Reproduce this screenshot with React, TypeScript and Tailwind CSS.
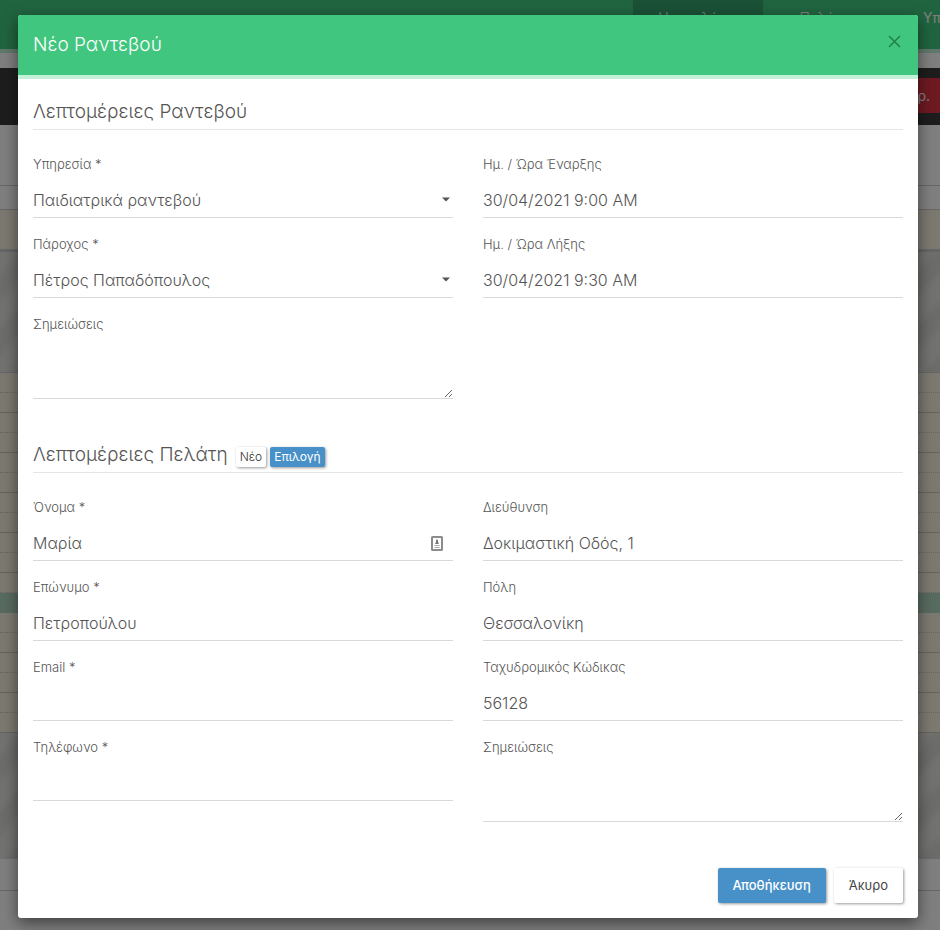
import { useState } from 'react'
import type { ReactNode } from 'react'

const CONTROL = 'mt-2.5 block w-full border-b border-[#d9d9d9] bg-transparent text-base text-[#555] outline-none'

interface FieldProps {
  id: string
  label: string
  value?: string
  icon?: ReactNode
}

function Label({ id, label }: { id: string; label: string }) {
  return (
    <label htmlFor={id} className="block text-[13px] leading-4 text-[#555]">
      {label}
    </label>
  )
}

function TextField({ id, label, value = '', icon }: FieldProps) {
  return (
    <div className="relative pt-[18px]">
      <Label id={id} label={label} />
      <input id={id} type="text" defaultValue={value} className={`${CONTROL} h-9`} />
      {icon && <span className="absolute right-2.5 bottom-2.5">{icon}</span>}
    </div>
  )
}

function SelectField({ id, label, value = '' }: FieldProps) {
  return (
    <div className="relative pt-[18px]">
      <Label id={id} label={label} />
      <select id={id} defaultValue={value} className={`${CONTROL} h-9 appearance-none`}>
        <option value={value}>{value}</option>
      </select>
      <svg className="pointer-events-none absolute right-[3px] bottom-4" width="8" height="5" viewBox="0 0 8 5">
        <path d="M0 0.5h8L4 4.5z" fill="#555" />
      </svg>
    </div>
  )
}

function NotesField({ id, label }: FieldProps) {
  return (
    <div className="pt-[18px]">
      <Label id={id} label={label} />
      <textarea id={id} className={`${CONTROL} h-[57px] resize`} />
    </div>
  )
}

function SectionTitle({ title, children }: { title: string; children?: ReactNode }) {
  return (
    <div className="flex h-9 items-center gap-1 border-b border-[#e5e5e5]">
      <h2 className="mr-1 text-[19px] leading-8 text-[#555]">{title}</h2>
      {children}
    </div>
  )
}

function ContactIcon() {
  return (
    <svg width="12" height="15" viewBox="0 0 12 15" fill="none">
      <rect x="1" y="1" width="10" height="13" rx="0.5" stroke="#8c8c8c" strokeWidth="2" />
      <path d="M6 3l1 1.5v1.5L8 8H4l1-2V4.500z" fill="#777" />
      <path d="M3.500 9.500h5M3.500 11.500h5" stroke="#aaa" />
    </svg>
  )
}

const STRIPES =
  'bg-[repeating-linear-gradient(135deg,#e4e4e0_0px,#e4e4e0_12px,#d9d9d5_20px,#d9d9d5_30px,#e4e4e0_38px)]'

function Slots({ count }: { count: number }) {
  return (
    <>
      {Array.from({ length: count }, (_, i) => (
        <div
          key={i}
          className={`h-5 border-b border-[#cdc8ba] bg-[#f8f3e2] ${i % 2 === 0 ? 'border-dotted' : 'border-solid'}`}
        />
      ))}
    </>
  )
}

function CalendarPage() {
  return (
    <div className="min-h-screen overflow-hidden bg-white" aria-hidden="true">
      <nav className="flex h-[53px] border-b-4 border-[#c0f1d6] bg-[#41c87f] pl-[633px] text-sm text-white">
        <a href="#calendar" className="w-[130px] shrink-0 bg-[#36a36e] pt-2 text-center">
          Ημερολόγιο
        </a>
        <a href="#customers" className="w-[130px] shrink-0 pt-2 text-center">
          Πελάτες
        </a>
        <a href="#services" className="shrink-0 px-[30px] pt-2 font-normal">
          Υπηρεσίες
        </a>
      </nav>
      <div className="mt-[15px] flex h-[57px] items-start justify-end bg-[#3a3a3a] pt-2.5">
        <button type="button" className="h-[35px] bg-[#dc3545] px-2.5 text-sm font-normal text-white">
          Διαγρ.
        </button>
      </div>
      <div className="h-[61px] border-b border-[#ccc]" />
      <div className="h-6 border-b border-[#ccc]" />
      <div className="h-10 border-b border-[#ccc] bg-[#f8f3e2]" />
      <div className={`h-[123px] border-t-2 border-b border-[#ccc] ${STRIPES}`} />
      <Slots count={11} />
      <div className="h-5 bg-[#b0d6c0]" />
      <Slots count={6} />
      <div className={`h-[126px] ${STRIPES}`} />
      <div className="h-8 border-b border-[#ccc]" />
      <div className="h-10" />
    </div>
  )
}

export default function App() {
  const [open, setOpen] = useState(true)
  const close = () => setOpen(false)

  return (
    <div className="relative h-screen overflow-hidden font-['Inter','Noto_Sans',sans-serif] font-light">
      <CalendarPage />
      {open && (
        <div className="absolute inset-0 overflow-hidden bg-black/50 pt-[15px] pr-[22px] pl-[18px]">
          <div
            role="dialog"
            aria-modal="true"
            aria-labelledby="dialog-title"
            className="mx-auto max-w-[900px] overflow-hidden rounded-[3px] bg-white shadow-[0_5px_15px_rgba(0,0,0,0.5)]"
          >
            <header className="flex h-16 items-start justify-between border-b-4 border-[#c3f0d7] bg-[#41c67f] px-[15px]">
              <h1 id="dialog-title" className="pt-4 text-[19px] leading-7 text-white">
                Νέο Ραντεβού
              </h1>
              <button type="button" aria-label="Κλείσιμο" onClick={close} className="mt-[18px] p-0.5">
                <svg width="13" height="13" viewBox="0 0 13 13" stroke="#21804b" strokeWidth="1.5">
                  <path d="M1 1l11 11M12 1L1 12" />
                </svg>
              </button>
            </header>

            <form className="px-[15px] pt-[15px]" onSubmit={(e) => e.preventDefault()}>
              <SectionTitle title="Λεπτομέρειες Ραντεβού" />
              <div className="mt-2 grid grid-cols-2 gap-x-[30px]">
                <div>
                  <SelectField id="service" label="Υπηρεσία *" value="Παιδιατρικά ραντεβού" />
                  <SelectField id="provider" label="Πάροχος *" value="Πέτρος Παπαδόπουλος" />
                  <NotesField id="appointment-notes" label="Σημειώσεις" />
                </div>
                <div>
                  <TextField id="start" label="Ημ. / Ώρα Έναρξης" value="30/04/2021 9:00 AM" />
                  <TextField id="end" label="Ημ. / Ώρα Λήξης" value="30/04/2021 9:30 AM" />
                </div>
              </div>

              <div className="mt-[38px]">
                <SectionTitle title="Λεπτομέρειες Πελάτη">
                  <button
                    type="button"
                    className="mt-1 h-5 rounded-xs bg-white px-1 text-xs text-[#333] shadow-[1px_1px_3px_rgba(0,0,0,0.4)]"
                  >
                    Νέο
                  </button>
                  <button
                    type="button"
                    className="mt-1 h-5 rounded-xs bg-[#4790c8] px-1 text-xs font-normal text-white shadow-[1px_1px_3px_rgba(0,0,0,0.4)]"
                  >
                    Επιλογή
                  </button>
                </SectionTitle>
              </div>
              <div className="mt-2 grid grid-cols-2 gap-x-[30px]">
                <div>
                  <TextField id="first-name" label="Όνομα *" value="Μαρία" icon={<ContactIcon />} />
                  <TextField id="last-name" label="Επώνυμο *" value="Πετροπούλου" />
                  <TextField id="email" label="Email *" />
                  <TextField id="phone" label="Τηλέφωνο *" />
                </div>
                <div>
                  <TextField id="address" label="Διεύθυνση" value="Δοκιμαστική Οδός, 1" />
                  <TextField id="city" label="Πόλη" value="Θεσσαλονίκη" />
                  <TextField id="zip-code" label="Ταχυδρομικός Κώδικας" value="56128" />
                  <NotesField id="customer-notes" label="Σημειώσεις" />
                </div>
              </div>

              <footer className="mt-[46px] flex justify-end gap-2 pb-[15px]">
                <button
                  type="submit"
                  className="h-[35px] rounded-xs bg-[#4790c8] px-[15px] text-[13px] font-medium text-white shadow-[1px_1px_3px_rgba(0,0,0,0.4)]"
                >
                  Αποθήκευση
                </button>
                <button
                  type="button"
                  onClick={close}
                  className="h-[35px] rounded-xs bg-white px-[15px] text-[13px] font-normal text-[#444] shadow-[1px_1px_3px_rgba(0,0,0,0.4)]"
                >
                  Άκυρο
                </button>
              </footer>
            </form>
          </div>
        </div>
      )}
    </div>
  )
}
